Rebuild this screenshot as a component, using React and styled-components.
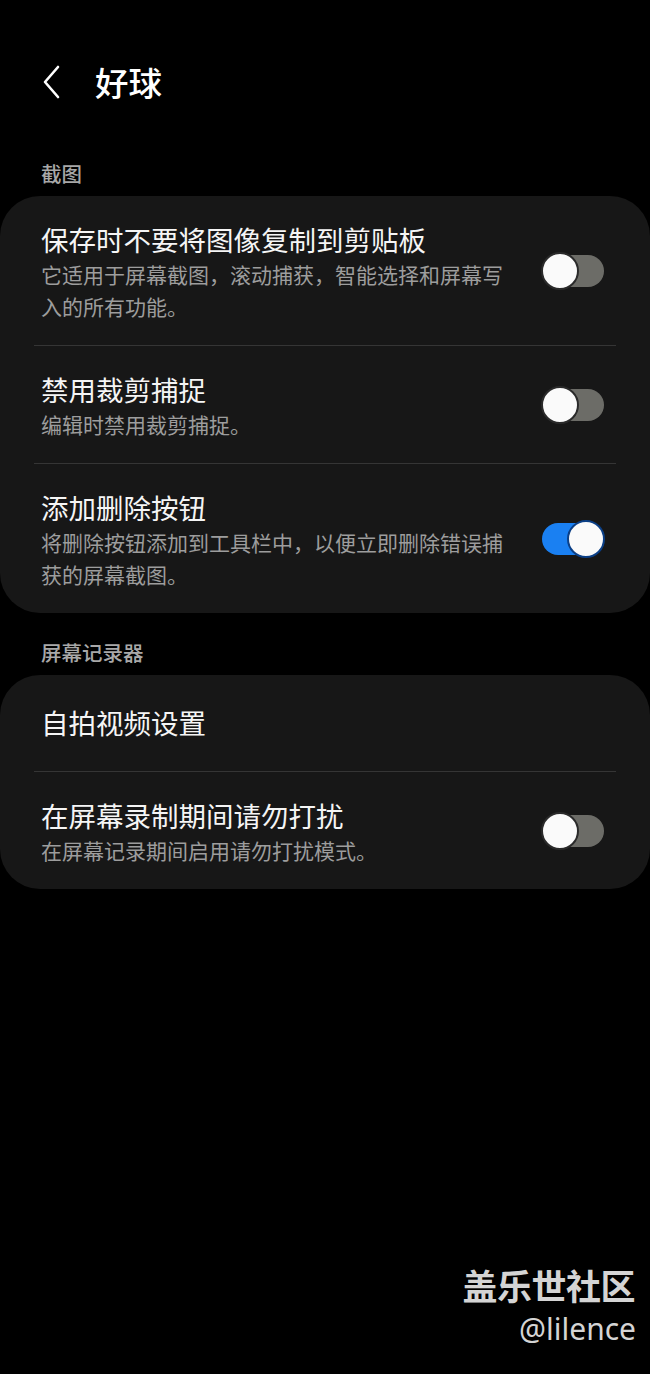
import { createGlobalStyle, styled } from "styled-components";

const GlobalStyle = createGlobalStyle`
  html, body {
    margin: 0;
    padding: 0;
    background: #000;
  }
  body {
    font-family: "Noto Sans CJK SC", "Noto Sans", sans-serif;
    color: #fff;
  }
`;

const sections = [
  {
    label: "截图",
    items: [
      {
        title: "保存时不要将图像复制到剪贴板",
        sub: "它适用于屏幕截图，滚动捕获，智能选择和屏幕写入的所有功能。",
        on: false,
      },
      { title: "禁用裁剪捕捉", sub: "编辑时禁用裁剪捕捉。", on: false },
      {
        title: "添加删除按钮",
        sub: "将删除按钮添加到工具栏中，以便立即删除错误捕获的屏幕截图。",
        on: true,
      },
    ],
  },
  {
    label: "屏幕记录器",
    items: [
      { title: "自拍视频设置" },
      {
        title: "在屏幕录制期间请勿打扰",
        sub: "在屏幕记录期间启用请勿打扰模式。",
        on: false,
      },
    ],
  },
];

function App() {
  return (
    <Page>
      <GlobalStyle />
      <Header>
        <BackBtn>
          <svg width="20" height="34" viewBox="0 0 20 34" fill="none">
            <path d="M16 2 L3 17 L16 32" stroke="#fff" strokeWidth="2.6" strokeLinecap="round" strokeLinejoin="round" />
          </svg>
        </BackBtn>
        <Title>好球</Title>
      </Header>

      {sections.map((section) => (
        <Section key={section.label}>
          <SectionLabel>{section.label}</SectionLabel>
          <Card>
            {section.items.map((item, i) => (
              <div key={item.title}>
                {i > 0 && <Divider />}
                <Row $single={!item.sub}>
                  <TextCol>
                    <ItemTitle>{item.title}</ItemTitle>
                    {item.sub && <ItemSub>{item.sub}</ItemSub>}
                  </TextCol>
                  {item.on !== undefined && (
                    <Switch $on={item.on}>
                      <Knob $on={item.on} />
                    </Switch>
                  )}
                </Row>
              </div>
            ))}
          </Card>
        </Section>
      ))}

      <Watermark>
        <Brand>盖乐世社区</Brand>
        <Handle>@lilence</Handle>
      </Watermark>
    </Page>
  );
}

const Page = styled.div`
  position: relative;
  width: 650px;
  min-height: 1374px;
  background: #000;
  overflow: hidden;
`;

const Header = styled.div`
  display: flex;
  align-items: center;
  height: 48px;
  padding: 58px 0 0 42px;
  margin-bottom: 53px;
`;

const BackBtn = styled.div`
  display: flex;
  align-items: center;
  width: 53px;
  height: 34px;
`;

const Title = styled.h1`
  margin: 0;
  font-size: 33.5px;
  font-weight: 500;
  line-height: 48px;
  color: #fff;
`;

const Section = styled.section`
  margin-bottom: 25px;
`;

const SectionLabel = styled.div`
  padding-left: 41px;
  font-size: 20.5px;
  font-weight: 500;
  line-height: 28px;
  color: #a8a8a8;
  margin-bottom: 9px;
`;

const Card = styled.div`
  background: #171717;
  border-radius: 40px;
`;

const Divider = styled.div`
  height: 1px;
  margin: 0 34px;
  background: #353535;
`;

const Row = styled.div`
  display: flex;
  align-items: center;
  justify-content: space-between;
  padding: ${(p) => (p.$single ? "28px 46px 30px 41px" : "24px 46px 23px 41px")};
`;

const TextCol = styled.div`
  width: 472px;
  display: flex;
  flex-direction: column;
`;

const ItemTitle = styled.div`
  font-size: 27.5px;
  line-height: 38px;
  color: #f5f5f5;
`;

const ItemSub = styled.div`
  font-size: 21px;
  line-height: 32px;
  color: #9d9d9d;
`;

const Switch = styled.div`
  position: relative;
  flex-shrink: 0;
  width: 62px;
  height: 32px;
  border-radius: 16px;
  background: ${(p) => (p.$on ? "#1a80f2" : "#6c6c67")};
`;

const Knob = styled.div`
  position: absolute;
  top: -3px;
  left: ${(p) => (p.$on ? "25px" : "-1px")};
  width: 34px;
  height: 34px;
  border-radius: 50%;
  background: #fafafa;
  border: 2px solid ${(p) => (p.$on ? "#0b3f86" : "#2a2a2a")};
  box-sizing: content-box;
`;

const Watermark = styled.div`
  position: absolute;
  right: 15px;
  top: 1261px;
  display: flex;
  flex-direction: column;
  align-items: flex-end;
`;

const Brand = styled.div`
  font-size: 35px;
  font-weight: 700;
  line-height: 48px;
  color: #d4d4d4;
  letter-spacing: -0.5px;
`;

const Handle = styled.div`
  font-family: "Noto Sans", sans-serif;
  font-size: 30px;
  line-height: 40px;
  color: #d4d4d4;
  margin-right: -1px;
`;

export default App;
